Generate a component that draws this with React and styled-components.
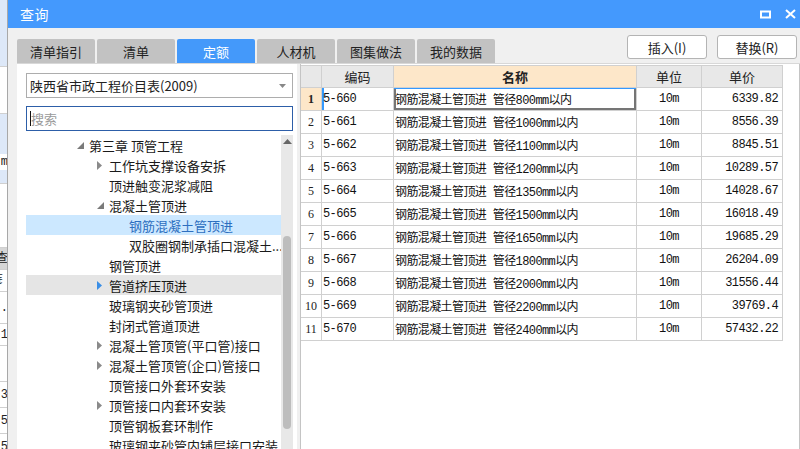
import React from "react";
import styled, { createGlobalStyle } from "styled-components";

const Global = createGlobalStyle`
  html, body { margin: 0; padding: 0; background: #f0f0f0; }
  body { font-family: "Noto Sans CJK SC", "Microsoft YaHei", sans-serif; font-size: 13px; color: #222; }
  * { box-sizing: border-box; }
`;

const Root = styled.div`
  display: flex;
  width: 800px;
  height: 449px;
  overflow: hidden;
`;

const BackStrip = styled.div`
  width: 8px;
  flex: none;
  display: flex;
  flex-direction: column;
  border-right: 1px solid #a8a8a8;
  background: #fff;
  overflow: hidden;
`;

const BackCell = styled.div`
  height: ${(p) => p.$h}px;
  flex: none;
  background: ${(p) => p.$bg || "#fff"};
  border-bottom: 1px solid ${(p) => (p.$line ? "#d0d0d0" : "transparent")};
  font: 12px "Liberation Mono", "Noto Sans CJK SC", monospace;
  line-height: ${(p) => p.$h}px;
  white-space: nowrap;
  direction: rtl;
  text-align: right;
  margin-right: -1px;
  overflow: hidden;
  color: #222;
`;

const Dialog = styled.div`
  flex: 1;
  display: flex;
  flex-direction: column;
  background: #f0f0f0;
  min-width: 0;
`;

const TitleBar = styled.div`
  height: 28px;
  flex: none;
  background: #4499fd;
  display: flex;
  align-items: center;
  padding: 0 0 0 12px;
  color: #fff;
  font-size: 14px;
`;

const Title = styled.span`
  flex: 1;
  letter-spacing: 0.5px;
`;

const TitleIcons = styled.div`
  display: flex;
  align-items: center;
  gap: 14px;
  padding-right: 4px;
`;

const Toolbar = styled.div`
  height: 35px;
  flex: none;
  display: flex;
  padding-left: 9px;
`;

const Tabs = styled.div`
  display: flex;
  gap: 2px;
  align-self: flex-end;
  flex: 1;
`;

const Tab = styled.div`
  width: 78px;
  height: 24px;
  display: flex;
  align-items: center;
  justify-content: center;
  border-radius: 2px 2px 0 0;
  background: ${(p) => (p.$active ? "#4499fa" : "#c2c2c2")};
  color: ${(p) => (p.$active ? "#fff" : "#222")};
  font-size: 13px;
`;

const Buttons = styled.div`
  display: flex;
  gap: 10px;
  padding-top: 7px;
  padding-right: 3px;
`;

const Button = styled.div`
  width: 80px;
  height: 24px;
  background: #fff;
  border: 1px solid #b4b4b4;
  border-radius: 3px;
  display: flex;
  align-items: center;
  justify-content: center;
  font-size: 13px;
  color: #222;
`;

const Content = styled.div`
  flex: 1;
  display: flex;
  margin-left: 9px;
  border-top: 1px solid #d8d8d8;
  min-height: 0;
`;

const LeftPanel = styled.div`
  width: 280px;
  flex: none;
  background: #fff;
  display: flex;
  flex-direction: column;
  padding: 9px 4px 0 9px;
  gap: 8px;
`;

const Combo = styled.div`
  height: 25px;
  border: 1px solid #adadad;
  display: flex;
  align-items: center;
  padding: 0 6px 0 3px;
  font-size: 13px;
  color: #222;
`;

const ComboText = styled.span`
  flex: 1;
`;

const Search = styled.div`
  height: 25px;
  border: 1px solid #2d5ea8;
  display: flex;
  align-items: center;
  padding-left: 3px;
  font-size: 13px;
  color: #9a9a9a;
`;

const Caret = styled.span`
  width: 1px;
  height: 15px;
  background: #111;
`;

const TreeWrap = styled.div`
  flex: 1;
  display: flex;
  min-height: 0;
  margin-top: -4px;
`;

const Tree = styled.div`
  flex: 1;
  display: flex;
  flex-direction: column;
  overflow: hidden;
`;

const TreeRow = styled.div`
  height: 20px;
  flex: none;
  display: flex;
  align-items: center;
  padding-left: ${(p) => 49 + p.$level * 20}px;
  background: ${(p) => (p.$selected ? "#cce8ff" : p.$hover ? "#e5e5e5" : "transparent")};
  color: ${(p) => (p.$selected ? "#2d6fc0" : "#1a1a1a")};
  font-size: 13px;
  white-space: nowrap;
`;

const Toggle = styled.span`
  width: 14px;
  flex: none;
  display: flex;
  align-items: center;
  justify-content: flex-start;
  padding-left: 2px;
`;

const Scrollbar = styled.div`
  width: 12px;
  flex: none;
  background: #e8e8e8;
  display: flex;
  flex-direction: column;
  align-items: center;
  padding-top: 4px;
`;

const Thumb = styled.div`
  width: 8px;
  height: 193px;
  margin-top: 92px;
  background: #bdbdbd;
  border-radius: 4px;
`;

const RightPanel = styled.div`
  flex: 1;
  margin-left: 3px;
  background: #fff;
  border-left: 1px solid #c4c4c4;
  border-right: 1px solid #c4c4c4;
  padding-top: 1px;
  min-width: 0;
`;

const Grid = styled.div`
  display: grid;
  grid-template-columns: 21px 72px 243px 65px 81px;
  width: 482px;
`;

const Head = styled.div`
  height: 23px;
  display: flex;
  align-items: center;
  justify-content: center;
  background: ${(p) => (p.$accent ? "#fde7c9" : "#e8e8e8")};
  font-weight: ${(p) => (p.$accent ? 700 : 400)};
  border-right: 1px solid #d0d0d0;
  border-bottom: 1px solid #d0d0d0;
  border-top: 1px solid #d0d0d0;
  font-size: 13px;
  color: #222;
`;

const Cell = styled.div`
  height: 23px;
  display: flex;
  align-items: center;
  justify-content: ${(p) => p.$align || "flex-start"};
  padding: 0 ${(p) => (p.$align === "flex-end" ? 4 : 1)}px 0 1px;
  border-right: 1px solid #d0d0d0;
  border-bottom: 1px solid #d0d0d0;
  font-family: "Liberation Mono", "Noto Sans CJK SC", monospace;
  font-size: 12px;
  letter-spacing: -0.6px;
  color: #111;
  white-space: nowrap;
  overflow: hidden;
  box-shadow: ${(p) =>
    p.$current
      ? "inset 0 1px 0 #3399ff, inset -2px -2px 0 #757575, inset 2px 0 0 #757575"
      : p.$mark
      ? "inset 2px 0 0 #3399ff"
      : "none"};
`;

const NumCell = styled.div`
  height: 23px;
  display: flex;
  align-items: center;
  justify-content: center;
  background: ${(p) => (p.$active ? "#fde7c9" : "#fff")};
  border-right: 1px solid #d0d0d0;
  border-bottom: 1px solid #d0d0d0;
  font-family: "Liberation Serif", serif;
  font-size: 12px;
  font-weight: ${(p) => (p.$active ? 700 : 400)};
  color: #222;
`;

const Tri = ({ kind }) => {
  if (kind === "open")
    return (
      <svg width="7" height="7" viewBox="0 0 7 7">
        <polygon points="7,0 7,7 0,7" fill="#7a7a7a" />
      </svg>
    );
  return (
    <svg width="5" height="9" viewBox="0 0 5 9">
      <polygon points="0,0 5,4.5 0,9" fill={kind === "blue" ? "#3a8ee6" : "#8a8a8a"} />
    </svg>
  );
};

const treeData = [
  { t: "第三章 顶管工程", l: 0, k: "open" },
  { t: "工作坑支撑设备安拆", l: 1, k: "closed" },
  { t: "顶进触变泥浆减阻", l: 1 },
  { t: "混凝土管顶进", l: 1, k: "open" },
  { t: "钢筋混凝土管顶进", l: 2, sel: true },
  { t: "双胶圈钢制承插口混凝土...", l: 2 },
  { t: "钢管顶进", l: 1 },
  { t: "管道挤压顶进", l: 1, k: "blue", hover: true },
  { t: "玻璃钢夹砂管顶进", l: 1 },
  { t: "封闭式管道顶进", l: 1 },
  { t: "混凝土管顶管(平口管)接口", l: 1, k: "closed" },
  { t: "混凝土管顶管(企口)管接口", l: 1, k: "closed" },
  { t: "顶管接口外套环安装", l: 1 },
  { t: "顶管接口内套环安装", l: 1, k: "closed" },
  { t: "顶管钢板套环制作", l: 1 },
  { t: "玻璃钢夹砂管内铺层接口安装", l: 1 },
];

const rows = [
  ["5-660", "800", "6339.82"],
  ["5-661", "1000", "8556.39"],
  ["5-662", "1100", "8845.51"],
  ["5-663", "1200", "10289.57"],
  ["5-664", "1350", "14028.67"],
  ["5-665", "1500", "16018.49"],
  ["5-666", "1650", "19685.29"],
  ["5-667", "1800", "26204.09"],
  ["5-668", "2000", "31556.44"],
  ["5-669", "2200", "39769.4"],
  ["5-670", "2400", "57432.22"],
];

const backCells = [
  { h: 67, bg: "#dde8f8", line: true },
  { h: 47, line: true },
  { h: 40, bg: "#dde8f8" },
  { h: 16, t: "m" },
  { h: 14, bg: "#dde8f8", line: true },
  { h: 64, line: true },
  { h: 22, bg: "#d6d6d6", t: "查", line: true },
  { h: 22, t: "钅", line: true },
  { h: 32, t: ".", line: true },
  { h: 22, t: "1", line: true },
  { h: 36, line: true },
  { h: 26, t: "3", line: true },
  { h: 26, t: "5", line: true },
  { h: 26, t: "5", line: true },
  { h: 26, t: "5" },
];

export default function App() {
  return (
    <Root>
      <Global />
      <BackStrip>
        {backCells.map((c, i) => (
          <BackCell key={i} $h={c.h} $bg={c.bg} $line={c.line}>
            {c.t || ""}
          </BackCell>
        ))}
      </BackStrip>
      <Dialog>
        <TitleBar>
          <Title>查询</Title>
          <TitleIcons>
            <svg width="11" height="9" viewBox="0 0 11 9">
              <rect x="1" y="1.5" width="9" height="6" fill="none" stroke="#fff" strokeWidth="2" />
            </svg>
            <svg width="11" height="10" viewBox="0 0 11 10">
              <path d="M1 1 L10 9 M10 1 L1 9" stroke="#fff" strokeWidth="2" />
            </svg>
          </TitleIcons>
        </TitleBar>
        <Toolbar>
          <Tabs>
            <Tab>清单指引</Tab>
            <Tab>清单</Tab>
            <Tab $active>定额</Tab>
            <Tab>人材机</Tab>
            <Tab>图集做法</Tab>
            <Tab>我的数据</Tab>
          </Tabs>
          <Buttons>
            <Button>插入(I)</Button>
            <Button>替换(R)</Button>
          </Buttons>
        </Toolbar>
        <Content>
          <LeftPanel>
            <Combo>
              <ComboText>陕西省市政工程价目表(2009)</ComboText>
              <svg width="7" height="4" viewBox="0 0 7 4">
                <polygon points="0,0 7,0 3.5,4" fill="#888" />
              </svg>
            </Combo>
            <Search>
              <Caret />
              搜索
            </Search>
            <TreeWrap>
              <Tree>
                {treeData.map((n, i) => (
                  <TreeRow key={i} $level={n.l} $selected={n.sel} $hover={n.hover}>
                    <Toggle>{n.k ? <Tri kind={n.k} /> : null}</Toggle>
                    {n.t}
                  </TreeRow>
                ))}
              </Tree>
              <Scrollbar>
                <svg width="9" height="5" viewBox="0 0 9 5">
                  <polygon points="0,5 9,5 4.5,0" fill="#666" />
                </svg>
                <Thumb />
              </Scrollbar>
            </TreeWrap>
          </LeftPanel>
          <RightPanel>
            <Grid>
              <Head />
              <Head>编码</Head>
              <Head $accent>名称</Head>
              <Head>单位</Head>
              <Head>单价</Head>
              {rows.map((r, i) => (
                <React.Fragment key={r[0]}>
                  <NumCell $active={i === 0}>{i + 1}</NumCell>
                  <Cell $mark={i === 0}>{r[0]}</Cell>
                  <Cell $current={i === 0}>{`钢筋混凝土管顶进 管径${r[1]}mm以内`}</Cell>
                  <Cell $align="center">10m</Cell>
                  <Cell $align="flex-end">{r[2]}</Cell>
                </React.Fragment>
              ))}
            </Grid>
          </RightPanel>
        </Content>
      </Dialog>
    </Root>
  );
}
